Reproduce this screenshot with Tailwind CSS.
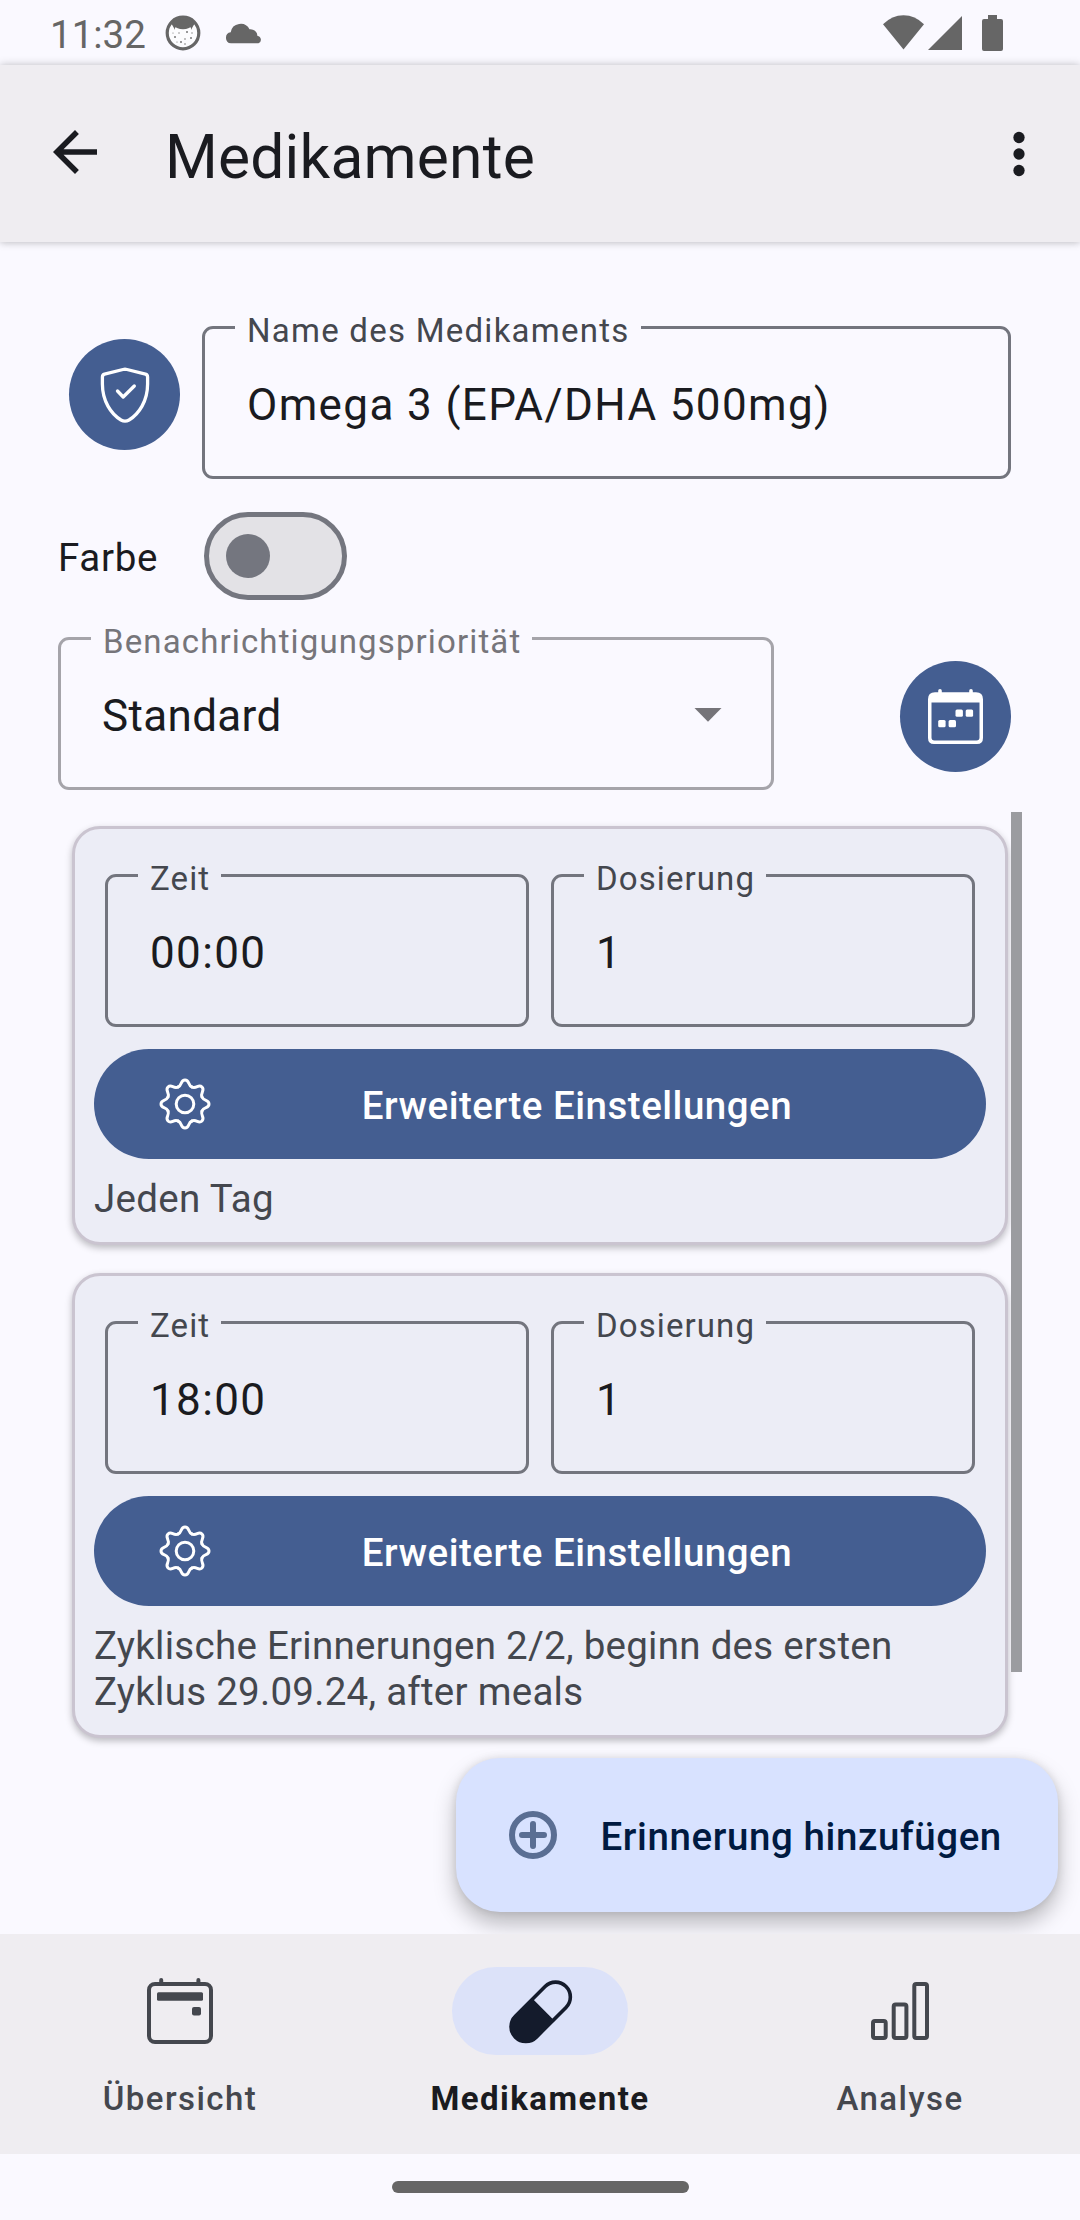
<!DOCTYPE html>
<html lang="de">
<head>
<meta charset="utf-8">
<title>Medikamente</title>
<script src="https://cdn.jsdelivr.net/npm/@tailwindcss/browser@4"></script>
</head>
<body class="w-[1080px] h-[2220px] overflow-hidden bg-[#faf9ff] font-[Roboto,sans-serif] text-[#1a1b20] flex flex-col">
<svg class="hidden">
  <defs>
    <path id="lobe" d="M-7-17C-2.400-18.900-4.800-24 0-24S2.400-18.900 7-17"/>
    <g id="gear" fill="none" stroke="#fff" stroke-width="3" stroke-linecap="round">
      <use href="#lobe"/><use href="#lobe" transform="rotate(45)"/><use href="#lobe" transform="rotate(90)"/><use href="#lobe" transform="rotate(135)"/>
      <use href="#lobe" transform="rotate(180)"/><use href="#lobe" transform="rotate(225)"/><use href="#lobe" transform="rotate(270)"/><use href="#lobe" transform="rotate(315)"/>
      <circle r="8.8"/>
    </g>
  </defs>
</svg>

<!-- status bar -->
<div class="h-[65px] shrink-0 flex items-center pl-[50px] pr-[77px] text-[#666]">
  <span class="text-[38.5px] leading-[44px] pt-[5px]">11:32</span>
  <svg class="ml-[19.5px] w-[36px] h-[36px]" viewBox="-18 -18 36 36">
    <circle r="15.8" fill="#fcfcfe" stroke="#666" stroke-width="3.2"/>
    <path d="M-12-10Q0-20 12-10Q9.500-6 8-3Q8.500-7 6-5Q0-2.500-6-5Q-8.500-7-8-3Q-9.500-6-12-10Z" fill="#666"/>
    <g fill="#777"><circle cx="-8" cy="4" r="1"/><circle cx="4" cy="-1" r="1"/><circle cx="8" cy="5" r="1"/><circle cx="-2" cy="9" r="1"/><circle cx="2" cy="6" r=".8"/><circle cx="-4" cy="0" r=".7"/><circle cx="9" cy="0" r=".7"/><circle cx="2" cy="11" r=".8"/><circle cx="-10" cy="0" r=".6"/><circle cx="-6" cy="9" r=".6"/></g>
  </svg>
  <svg class="ml-[24px] w-[38px] h-[22px]" viewBox="0 0 38 22" fill="#666"><path d="M6 21.300A5.600 5.600 0 0 1 5.700 10.200A10 10 0 0 1 24.500 7.300A7 7 0 0 1 32.500 14A3.800 3.800 0 0 1 33.500 21.300Z"/></svg>
  <svg class="ml-auto w-[41px] h-[35px]" viewBox="0 0 41 35" fill="#666"><path d="M0 9.300Q9 .3 20.500.3T41 9.300L20.500 34.500Z"/></svg>
  <svg class="ml-[4px] w-[34px] h-[34px]" viewBox="0 0 34 34" fill="#666"><path d="M34 0V34H0Z"/></svg>
  <svg class="ml-[20px] w-[21px] h-[36px]" viewBox="0 0 21 36" fill="#666"><path d="M6 0H15V4H19Q21 4 21 6V34Q21 36 19 36H2Q0 36 0 34V6Q0 4 2 4H6Z"/></svg>
</div>

<!-- top app bar -->
<header class="h-[177px] shrink-0 bg-[#efedf1] shadow-[0_0_9px_rgba(0,0,0,0.2),0_1px_6px_rgba(0,0,0,0.08)] flex items-center pl-[42px] pr-[28px]">
  <svg class="w-[66px] h-[66px] mb-[3px]" viewBox="0 0 24 24" fill="#1a1b20"><path d="M20 11H7.830l5.590-5.590L12 4l-8 8 8 8 1.410-1.410L7.830 13H20v-2z"/></svg>
  <h1 class="ml-[57px] pt-[8px] text-[60.5px] leading-[72px] tracking-[0.2px]">Medikamente</h1>
  <svg class="ml-auto w-[66px] h-[66px]" viewBox="0 0 24 24" fill="#1a1b20"><circle cx="12" cy="6" r="2.050"/><circle cx="12" cy="12" r="2.050"/><circle cx="12" cy="18" r="2.050"/></svg>
</header>

<main class="relative h-[1692px] shrink-0 pt-[84px]">
  <div class="flex items-start pl-[69px]">
    <button class="mt-[13px] w-[111px] h-[111px] rounded-full bg-[#445e91] flex items-center justify-center">
      <svg class="w-[60px] h-[60px]" viewBox="-30 -30 60 60" fill="none" stroke="#fff" stroke-width="3.3" stroke-linecap="round" stroke-linejoin="round"><path d="M-2-25.500Q0-26 2-25.500L20.500-20.800Q22.500-20.200 22.600-18V-11C22.600 6 14 19 4 25Q0 27.200-4 25C-14 19-22.600 6-22.600-11V-18Q-22.500-20.200-20.500-20.800Z"/><path d="M-7.500-4L-1.800 2L9.300-9"/></svg>
    </button>
    <div class="relative ml-[22px] w-[809px] h-[153px] border-3 border-[#73757e] rounded-[11px] flex items-center pl-[42px] pt-[5px]">
      <label class="absolute left-[30px] top-[-15px] pl-[12px] pr-[11px] bg-[#faf9ff] text-[33px] leading-[33px] tracking-[1.25px] text-[#44474e] whitespace-nowrap">Name des Medikaments</label>
      <span class="text-[44px] leading-[52px] tracking-[1.375px]">Omega 3 (EPA/DHA 500mg)</span>
    </div>
  </div>

  <div class="mt-[33px] h-[88px] flex items-center pl-[58px]">
    <span class="w-[146px] pt-[4px] text-[38.5px] leading-[46px] tracking-[0.7px]">Farbe</span>
    <div class="w-[143px] h-[88px] rounded-full border-[5.5px] border-[#74767f] bg-[#e3e2e6] flex items-center pl-[16.5px]"><div class="w-[44px] h-[44px] rounded-full bg-[#74767f]"></div></div>
  </div>

  <div class="mt-[37px] flex items-start pl-[58px]">
    <div class="relative w-[716px] h-[153px] border-3 border-[#a5a4aa] rounded-[11px] flex items-center pl-[41px] pr-[49px] pt-[5px]">
      <label class="absolute left-[30px] top-[-15px] pl-[12px] pr-[11px] bg-[#faf9ff] text-[33px] leading-[33px] tracking-[1.13px] text-[#76757a] whitespace-nowrap">Benachrichtigungspriorität</label>
      <span class="text-[44px] leading-[52px] tracking-[0.35px]">Standard</span>
      <svg class="ml-auto mb-[3px] w-[28px] h-[14px]" viewBox="0 0 28 14" fill="#757479"><path d="M.5 0H27.500L14 13.800Z"/></svg>
    </div>
    <button class="mt-[24px] ml-[126px] w-[111px] h-[111px] rounded-full bg-[#445e91] flex items-center justify-center">
      <svg class="w-[56px] h-[56px]" viewBox="928 689 56 56"><g fill="#fff"><path fill-rule="evenodd" d="M935 692.300H976Q983 692.300 983 699.300V738Q983 744 977 744H934Q928 744 928 738V699.300Q928 692.300 935 692.300ZM931.500 702.500V737.500Q931.500 740.500 934.500 740.500H976.500Q979.500 740.500 979.500 737.500V702.500Z"/><rect x="938.200" y="689" width="3.600" height="8" rx="1.800"/><rect x="969.200" y="689" width="3.600" height="8" rx="1.800"/><rect x="938.200" y="720" width="7.400" height="7.200" rx="1.500"/><rect x="948.600" y="720" width="7.400" height="7.200" rx="1.500"/><rect x="955.500" y="709.500" width="7.400" height="7.200" rx="1.500"/><rect x="965.700" y="709.500" width="7.400" height="7.200" rx="1.500"/></g></svg>
    </button>
  </div>

  <!-- reminders -->
  <section class="mt-[22px] pt-[14px] pl-[72px] flex flex-col gap-[28px]">
    <article class="w-[936px] border-3 border-[#cac4d0] rounded-[28px] bg-[#ecedf6] shadow-[0_3px_7px_rgba(0,0,0,0.25)] px-[19px] pt-[45px] pb-[20.5px]">
      <div class="flex gap-[22px] mx-[11px]">
        <div class="relative w-[424px] h-[153px] border-3 border-[#73757e] rounded-[11px] flex items-center pl-[42px] pt-[5px]">
          <label class="absolute left-[30px] top-[-15px] pl-[12px] pr-[11px] bg-[#ecedf6] text-[33px] leading-[33px] tracking-[1.1px] text-[#44474e]">Zeit</label>
          <span class="text-[44px] leading-[52px] tracking-[1.375px]">00:00</span>
        </div>
        <div class="relative w-[424px] h-[153px] border-3 border-[#73757e] rounded-[11px] flex items-center pl-[42px] pt-[5px]">
          <label class="absolute left-[30px] top-[-15px] pl-[12px] pr-[11px] bg-[#ecedf6] text-[33px] leading-[33px] tracking-[1.1px] text-[#44474e]">Dosierung</label>
          <span class="text-[44px] leading-[52px] tracking-[1.375px]">1</span>
        </div>
      </div>
      <button class="mt-[22px] w-full h-[110px] rounded-full bg-[#445e91] text-white flex items-center pl-[61px] pr-[47px]">
        <svg class="w-[60px] h-[60px]" viewBox="-30 -30 60 60"><use href="#gear"/></svg>
        <span class="flex-1 pt-[3px] text-center font-medium text-[38.5px] leading-[46px] tracking-[0.5px]">Erweiterte Einstellungen</span>
      </button>
      <p class="mt-[17px] text-[38.5px] leading-[45.5px] tracking-[0.3px] text-[#44474e]">Jeden Tag</p>
    </article>
    <article class="w-[936px] border-3 border-[#cac4d0] rounded-[28px] bg-[#ecedf6] shadow-[0_3px_7px_rgba(0,0,0,0.25)] px-[19px] pt-[45px] pb-[20.5px]">
      <div class="flex gap-[22px] mx-[11px]">
        <div class="relative w-[424px] h-[153px] border-3 border-[#73757e] rounded-[11px] flex items-center pl-[42px] pt-[5px]">
          <label class="absolute left-[30px] top-[-15px] pl-[12px] pr-[11px] bg-[#ecedf6] text-[33px] leading-[33px] tracking-[1.1px] text-[#44474e]">Zeit</label>
          <span class="text-[44px] leading-[52px] tracking-[1.375px]">18:00</span>
        </div>
        <div class="relative w-[424px] h-[153px] border-3 border-[#73757e] rounded-[11px] flex items-center pl-[42px] pt-[5px]">
          <label class="absolute left-[30px] top-[-15px] pl-[12px] pr-[11px] bg-[#ecedf6] text-[33px] leading-[33px] tracking-[1.1px] text-[#44474e]">Dosierung</label>
          <span class="text-[44px] leading-[52px] tracking-[1.375px]">1</span>
        </div>
      </div>
      <button class="mt-[22px] w-full h-[110px] rounded-full bg-[#445e91] text-white flex items-center pl-[61px] pr-[47px]">
        <svg class="w-[60px] h-[60px]" viewBox="-30 -30 60 60"><use href="#gear"/></svg>
        <span class="flex-1 pt-[3px] text-center font-medium text-[38.5px] leading-[46px] tracking-[0.5px]">Erweiterte Einstellungen</span>
      </button>
      <p class="mt-[17px] text-[38.5px] leading-[45.5px] tracking-[0.27px] text-[#44474e]">Zyklische Erinnerungen 2/2, beginn des ersten<br>Zyklus 29.09.24, after meals</p>
    </article>
  </section>
  <!-- scroll thumb -->
  <div class="absolute left-[1011px] top-[570px] w-[11px] h-[860px] bg-[#9b9ca0]"></div>

  <!-- floating action button -->
  <button class="absolute right-[22px] bottom-[22px] w-[602px] h-[154px] rounded-[44px] bg-[#d8e2ff] shadow-[0_12px_22px_rgba(0,0,0,0.26),0_0_8px_rgba(0,0,0,0.1)] flex items-center pl-[51px] text-[#001a41]">
    <svg class="w-[52px] h-[52px]" viewBox="-26 -26 52 52" stroke="#5a6e93" fill="none"><circle r="21" stroke-width="6"/><path d="M-11-0H11M0-11V11" stroke-width="6" stroke-linecap="round"/></svg>
    <span class="ml-[41.5px] pt-[3px] font-medium text-[38.5px] leading-[46px] tracking-[0.6px] whitespace-nowrap">Erinnerung hinzufügen</span>
  </button>
</main>

<!-- bottom navigation -->
<nav class="relative z-10 h-[220px] shrink-0 bg-[#efedf1] grid grid-cols-3 pt-[33px] text-[33px] leading-[44px] font-medium tracking-[1.45px] text-[#44474e]">
  <div class="flex flex-col items-center gap-[22px]">
    <div class="w-[176px] h-[88px] flex items-center justify-center">
      <svg class="w-[66px] h-[66px]" viewBox="0 0 66 66"><rect x="2" y="6" width="62" height="58" rx="6" fill="none" stroke="#44474e" stroke-width="4"/><g fill="#44474e"><rect x="12.200" y="0" width="4" height="8" rx="2"/><rect x="49.400" y="0" width="4" height="8" rx="2"/><rect x="10" y="14.300" width="46" height="8.500" rx="1.500"/><rect x="45" y="29" width="9" height="8.500" rx="2"/></g></svg>
    </div>
    <span>Übersicht</span>
  </div>
  <div class="flex flex-col items-center gap-[22px]">
    <div class="w-[176px] h-[88px] rounded-full bg-[#dce2f9] flex items-center justify-center">
      <svg class="w-[66px] h-[66px]" viewBox="-33 -33 66 66"><g transform="translate(.7 .8) rotate(45)"><rect x="-14.800" y="-35.800" width="29.600" height="71.600" rx="14.800" fill="none" stroke="#141b2c" stroke-width="3.600"/><path d="M-16-3.500H16V21A16 16 0 0 1-16 21Z" fill="#141b2c"/></g></svg>
    </div>
    <span class="font-bold text-[#1a1b20]">Medikamente</span>
  </div>
  <div class="flex flex-col items-center gap-[22px]">
    <div class="w-[176px] h-[88px] flex items-center justify-center">
      <svg class="w-[66px] h-[66px]" viewBox="867 1978 66 66" fill="none" stroke="#44474e" stroke-width="4"><rect x="873" y="2021" width="12.700" height="17" rx="2"/><rect x="893.700" y="2004.500" width="12.700" height="33.500" rx="2"/><rect x="914.300" y="1984" width="12.700" height="54" rx="2"/></svg>
    </div>
    <span>Analyse</span>
  </div>
</nav>
<div class="h-[66px] shrink-0 flex justify-center pt-[27px]"><div class="w-[297px] h-[12px] rounded-full bg-[#666]"></div></div>
</body>
</html>
